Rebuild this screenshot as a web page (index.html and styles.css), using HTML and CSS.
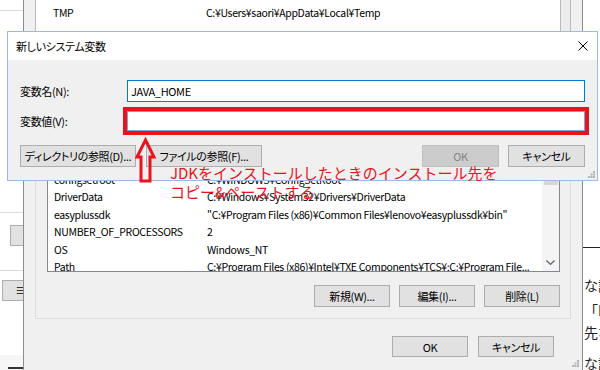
FILE: index.html
```html
<!DOCTYPE html>
<html lang="ja">
<head>
    <meta charset="UTF-8">
    <title>新しいシステム変数</title>
    <link rel="stylesheet" href="styles.css">
</head>
<body>
    <div class="desktop">
        <!-- page behind, left edge -->
        <div class="page-left">
            <div class="pl-line first"></div>
            <div class="pl-line second"></div>
            <div class="pl-btn one"></div>
            <div class="pl-line third"></div>
            <div class="pl-btn two">≡</div>
            <div class="pl-foot"><span></span></div>
        </div>

        <!-- environment variables window -->
        <div class="env-window">
            <div class="user-group">
                <div class="list short">
                    <div class="list-body">
                        <div class="row"><span class="name">TMP</span><span class="value">C:¥Users¥saori¥AppData¥Local¥Temp</span></div>
                    </div>
                    <div class="scrollbar slim"></div>
                </div>
            </div>

            <div class="group">
                <div class="list tall">
                    <div class="list-body">
                        <div class="list-head"><span class="name">変数</span><span class="value">値</span></div>
                        <div class="row"><span class="name">asl.log</span><span class="value">Destination=file</span></div>
                        <div class="row"><span class="name">CLASSPATH</span><span class="value">.;</span></div>
                        <div class="row"><span class="name">ComSpec</span><span class="value">C:¥WINDOWS¥system32¥cmd.exe</span></div>
                        <div class="row"><span class="name">CommonFiles</span><span class="value">C:¥Program Files¥Common Files</span></div>
                        <div class="row"><span class="name">COMPLUS</span><span class="value">EnableV2Profiler</span></div>
                        <div class="row"><span class="name">configsetroot</span><span class="value">C:¥WINDOWS¥ConfigSetRoot</span></div>
                        <div class="row"><span class="name">DriverData</span><span class="value">C:¥Windows¥System32¥Drivers¥DriverData</span></div>
                        <div class="row"><span class="name">easyplussdk</span><span class="value">"C:¥Program Files (x86)¥Common Files¥lenovo¥easyplussdk¥bin"</span></div>
                        <div class="row"><span class="name">NUMBER_OF_PROCESSORS</span><span class="value">2</span></div>
                        <div class="row"><span class="name">OS</span><span class="value">Windows_NT</span></div>
                        <div class="row"><span class="name">Path</span><span class="value">C:¥Program Files (x86)¥Intel¥TXE Components¥TCS¥;C:¥Program File...</span></div>
                    </div>
                    <div class="scrollbar">
                        <div class="thumb"></div>
                        <svg class="chevron" width="9" height="6" viewBox="0 0 9 6"><path d="M0.5 0.5 L4.5 4.5 L8.5 0.5" fill="none" stroke="#606060" stroke-width="1.2"/></svg>
                    </div>
                </div>
                <div class="btn-row">
                    <button class="btn">新規(W)...</button>
                    <button class="btn">編集(I)...</button>
                    <button class="btn">削除(L)</button>
                </div>
            </div>

            <div class="btn-row main">
                <button class="btn">OK</button>
                <button class="btn">キャンセル</button>
            </div>

            <svg class="grip" width="7" height="7" viewBox="0 0 7 7" fill="#b4b4b4">
                <rect x="5" y="0" width="2" height="2"/><rect x="2.5" y="2.5" width="2" height="2"/><rect x="5" y="2.5" width="2" height="2"/>
                <rect x="0" y="5" width="2" height="2"/><rect x="2.5" y="5" width="2" height="2"/><rect x="5" y="5" width="2" height="2"/>
            </svg>
        </div>

        <!-- page behind, right edge -->
        <div class="page-right">
            <div class="rule"></div>
            <p class="p1">な記事</p>
            <p class="p2">「IDE」</p>
            <p class="p3">先な</p>
            <p class="p4">な記事</p>
        </div>
    </div>

    <!-- new system variable dialog -->
    <div class="dialog">
        <div class="dialog-title">
            <span>新しいシステム変数</span>
            <svg class="close" width="10" height="10" viewBox="0 0 10 10"><path d="M0.5 0.5 L9.5 9.5 M9.5 0.5 L0.5 9.5" stroke="#000" stroke-width="1"/></svg>
        </div>
        <div class="dialog-body">
            <div class="field">
                <label>変数名(N):</label>
                <div class="input focus">JAVA_HOME</div>
            </div>
            <div class="field">
                <label>変数値(V):</label>
                <div class="highlight"><div class="input"></div></div>
            </div>
            <div class="dialog-buttons">
                <button class="btn wide">ディレクトリの参照(D)...</button>
                <button class="btn wide">ファイルの参照(F)...</button>
                <button class="btn push disabled">OK</button>
                <button class="btn">キャンセル</button>
            </div>
        </div>
        <svg class="grip small" width="7" height="7" viewBox="0 0 7 7" fill="#b4b4b4">
            <rect x="5" y="0" width="2" height="2"/><rect x="2.5" y="2.5" width="2" height="2"/><rect x="5" y="2.5" width="2" height="2"/>
            <rect x="0" y="5" width="2" height="2"/><rect x="2.5" y="5" width="2" height="2"/><rect x="5" y="5" width="2" height="2"/>
        </svg>
    </div>

    <!-- annotation -->
    <svg class="arrow" width="24" height="48" viewBox="0 0 24 48">
        <polygon points="11.5,3 20,20 16,20 16,44 7,44 7,20 3,20" fill="none" stroke="#e8141c" stroke-width="3"/>
    </svg>
    <div class="note">
        JDKをインストールしたときのインストール先を<br>
        コピー&amp;ペーストする
    </div>
</body>
</html>
```

FILE: styles.css
```css
* {
    box-sizing: border-box;
}

body {
    margin: 0;
    width: 600px;
    height: 370px;
    overflow: hidden;
    position: relative;
    background: #fff;
    color: #000;
    font-family: "Noto Sans CJK JP", sans-serif;
    font-size: 11px;
    letter-spacing: -0.35px;
    font-feature-settings: "palt";
}

.desktop {
    display: flex;
    height: 370px;
}

/* Left edge of the page behind */
.page-left {
    width: 23px;
    flex: none;
    display: flex;
    flex-direction: column;
    overflow: hidden;
    background: #fff;
}

.pl-line {
    height: 1px;
    background: #dadada;
}

.pl-line.first { margin-top: 10px; }
.pl-line.second { margin-top: 201px; }
.pl-line.third { margin-top: 24px; }

.pl-btn {
    height: 21px;
    background: #e1e1e1;
    border: 1px solid #adadad;
    border-right: none;
}

.pl-btn.one {
    margin: 12px 0 0 10px;
}

.pl-btn.two {
    margin: 9px -3px 0 2px;
    text-align: right;
    line-height: 19px;
    white-space: nowrap;
    font-size: 11px;
}

.pl-foot {
    flex: 1;
    margin-top: 54px;
    background: #f6f6f6;
    position: relative;
}

.pl-foot span {
    position: absolute;
    left: 8px;
    right: 0;
    bottom: 1px;
    height: 2px;
    background: #333;
}

/* Environment variables window */
.env-window {
    width: 560px;
    flex: none;
    position: relative;
    display: flex;
    flex-direction: column;
    background: #f0f0f0;
    border-left: 1px solid #8d8d8d;
    border-right: 1px solid #8d8d8d;
}

.user-group {
    height: 31px;
    margin: 0 11px;
}

.list {
    display: flex;
    background: #fff;
    border: 1px solid #828790;
    overflow: hidden;
}

.list.short {
    height: 31px;
    border-top: none;
    border-bottom: none;
    border-color: #b9b9b9;
}

.list.short .list-body {
    padding: 4px 0 0 17px;
}

.list.tall {
    height: 220px;
}

.list-body {
    flex: 1;
    padding-left: 6px;
    white-space: nowrap;
    overflow: hidden;
}

.list-head {
    height: 30px;
    display: flex;
    align-items: center;
}

.row {
    display: flex;
    height: 17.5px;
    line-height: 17.5px;
    font-size: 10.5px;
}

.name {
    width: 153px;
    flex: none;
}

.scrollbar {
    width: 17px;
    flex: none;
    display: flex;
    flex-direction: column;
    background: #f4f4f4;
}

.scrollbar.slim {
    width: 10px;
    background: #ececec;
    border-left: 1px solid #b9b9b9;
}

.thumb {
    margin: 17px 1px 0 2px;
    height: 115px;
    background: #d6d6d6;
}

.chevron {
    margin: auto auto 5px;
}

.group {
    margin: 9px 11px 0;
    padding: 11px 10px 11px 11px;
    border: 1px solid #dcdcdc;
}

.btn-row {
    display: flex;
    justify-content: flex-end;
    gap: 9px;
    margin-top: 13px;
}

.btn-row.main {
    gap: 10px;
    margin-top: 17px;
    padding-right: 28px;
}

.btn {
    width: 76px;
    height: 22px;
    padding: 0;
    font: inherit;
    letter-spacing: inherit;
    color: #000;
    background: #e1e1e1;
    border: 1px solid #adadad;
    border-radius: 0;
    display: flex;
    align-items: center;
    justify-content: center;
    white-space: nowrap;
}

.btn-row.main .btn {
    height: 21px;
}

.grip {
    position: absolute;
    right: 3px;
    top: 360px;
}

/* Right edge of the page behind */
.page-right {
    flex: 1;
    overflow: hidden;
    white-space: nowrap;
    background: #fff;
    font-size: 14px;
    line-height: 20px;
    letter-spacing: 0;
    color: #222;
    font-feature-settings: normal;
}

.rule {
    height: 1px;
    margin-top: 247px;
    background: #222;
}

.page-right p {
    margin: 0;
    padding-left: 1px;
}

.page-right .p1 { margin-top: 27px; }
.page-right .p2 { margin-top: 5px; }
.page-right .p3 { margin-top: 2px; }
.page-right .p4 { margin-top: 11px; }

/* New system variable dialog */
.dialog {
    position: absolute;
    left: 7px;
    top: 31px;
    width: 591px;
    height: 150px;
    display: flex;
    flex-direction: column;
    background: #f0f0f0;
    border: 1px solid #9db9e6;
}

.dialog-title {
    height: 28px;
    flex: none;
    display: flex;
    align-items: center;
    padding: 0 9px 0 8px;
    background: #fff;
}

.close {
    margin-left: auto;
}

.dialog-body {
    padding: 20px 12px 0;
}

.field {
    display: flex;
    align-items: center;
}

.field + .field {
    margin-top: 5px;
}

.field label {
    width: 107px;
    flex: none;
}

.input {
    width: 458px;
    height: 22px;
    padding-left: 3px;
    line-height: 20px;
    background: #fff;
    border: 1px solid #7aa7d8;
}

.input.focus {
    border-color: #0078d7;
}

.highlight {
    margin-left: -4px;
    border: 4px solid #e8141c;
}

.highlight .input {
    height: 20px;
}

.dialog-buttons {
    display: flex;
    gap: 10px;
    margin-top: 10px;
}

.dialog-buttons .btn {
    width: 77px;
}

.dialog-buttons .btn.wide {
    width: 116px;
}

.dialog-buttons .push {
    margin-left: auto;
    margin-right: -1px;
}

.btn.disabled {
    background: #cccccc;
    border-color: #bfbfbf;
    color: #838383;
}

.grip.small {
    top: auto;
    bottom: 2px;
    right: 2px;
}

/* Annotation over the screenshot */
.arrow {
    position: absolute;
    left: 134px;
    top: 137px;
}

.note {
    position: absolute;
    left: 170px;
    top: 163px;
    color: #e8141c;
    font-size: 15px;
    line-height: 19px;
    letter-spacing: 0;
    font-feature-settings: normal;
    white-space: nowrap;
}
```
